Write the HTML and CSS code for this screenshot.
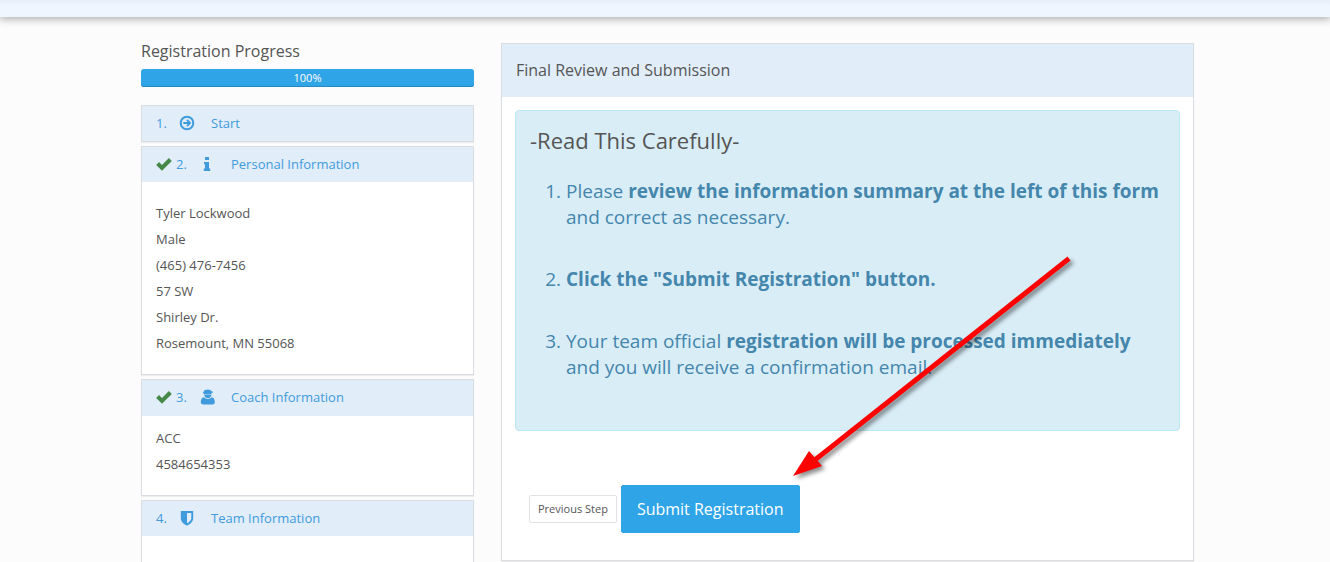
FILE: index.html
```
<!DOCTYPE html>
<html lang="en">
<head>
<meta charset="utf-8">
<title>Team Registration</title>
<link rel="stylesheet" href="styles.css">
</head>
<body>
<header class="topbar"></header>
<div class="layout">
  <aside class="sidebar">
    <div class="progress-label" id="progress-label">Registration Progress</div>
    <div class="progress" role="progressbar" aria-labelledby="progress-label" aria-valuenow="100"><div class="progress-bar">100%</div></div>

    <section class="step">
      <a class="step-heading" href="#start">
        <span class="step-number">1.</span>
        <svg class="icon" viewBox="0 0 16 16" fill="none" stroke="currentColor" stroke-width="2"><circle cx="8" cy="8" r="6.3"/><path d="M4.3 8h6M8 4.8 11 8 8 11.2" stroke-width="1.9"/></svg>
        <span>Start</span>
      </a>
    </section>

    <section class="step">
      <a class="step-heading" href="#personal">
        <svg class="icon check" viewBox="0 0 16 16"><path fill="currentColor" d="M.2 8.900 3 6 6 9 12.900 2 15.800 4.900 6 14.700z"/></svg>
        <span class="step-number">2.</span>
        <svg class="icon" viewBox="0 0 16 16" fill="currentColor"><path d="M6 1h4v3H6zM5 6h5v6.500h1.200v2.500H4.800v-2.500H6V8.300H5z"/></svg>
        <span>Personal Information</span>
      </a>
      <div class="step-body roomy">
        <div>Tyler Lockwood</div>
        <div>Male</div>
        <div>(465) 476-7456</div>
        <div>57 SW</div>
        <div>Shirley Dr.</div>
        <div>Rosemount, MN 55068</div>
      </div>
    </section>

    <section class="step">
      <a class="step-heading tall" href="#coach">
        <svg class="icon check" viewBox="0 0 16 16"><path fill="currentColor" d="M.2 8.900 3 6 6 9 12.900 2 15.800 4.900 6 14.700z"/></svg>
        <span class="step-number">3.</span>
        <svg class="icon" viewBox="0 0 16 16" fill="currentColor"><path d="M4.600 2.800C5 1.200 6.500.4 8.800.4c2 0 3.200.7 3.600 1.800l1.500.3v1.200h-1.400v1.200H4.700L4 3.300z"/><path d="M5 5.400h7.600C12.200 7.800 10.700 9 8.800 9S5.400 7.800 5 5.400z"/><path d="M5 8.300c1 1.100 2.300 1.700 3.800 1.700s2.800-.6 3.800-1.700c2.300.4 3.200 2.200 3.200 4.800 0 1.600-.8 2.400-2.300 2.400H4.100c-1.500 0-2.300-.8-2.300-2.400 0-2.600.9-4.400 3.200-4.800z"/></svg>
        <span>Coach Information</span>
      </a>
      <div class="step-body">
        <div>ACC</div>
        <div>4584654353</div>
      </div>
    </section>

    <section class="step step-open">
      <a class="step-heading" href="#team">
        <span class="step-number">4.</span>
        <svg class="icon" viewBox="0 0 16 16" fill="currentColor" fill-rule="evenodd"><path d="M1.800 1h12.400v7.200c0 3.400-2.600 5.600-6.200 7.300-3.600-1.700-6.200-3.900-6.200-7.300zM8 3v10.200c2.500-1.400 4.300-2.900 4.300-5V3z"/></svg>
        <span>Team Information</span>
      </a>
    </section>
  </aside>

  <main class="review">
    <h1 class="review-heading">Final Review and Submission</h1>
    <div class="review-body">
      <div class="notice">
        <h2 class="notice-title">-Read This Carefully-</h2>
        <ol class="notice-list">
          <li>Please <strong>review the information summary at the left of this form</strong> and correct as necessary.</li>
          <li><strong>Click the "Submit Registration" button.</strong></li>
          <li>Your team official <strong>registration will be processed immediately</strong> and you will receive a confirmation email.</li>
        </ol>
      </div>
      <div class="actions">
        <button class="btn btn-previous" type="button">Previous Step</button>
        <button class="btn btn-submit" type="submit">Submit Registration</button>
      </div>
    </div>
    <svg class="arrow" viewBox="0 0 290 230" aria-hidden="true">
      <g fill="#f00"><path d="M277.500 6.500 280.500 10.500 27 211.500 24 207.500z"/><path d="M3 226 19 201 32 216z"/></g>
    </svg>
  </main>
</div>
</body>
</html>
```
FILE: styles.css
```
* { box-sizing: border-box; }

body {
  margin: 0;
  min-height: 100vh;
  display: flex;
  flex-direction: column;
  background: #fcfcfc;
  color: #555;
  font: 13px/26px "Open Sans", sans-serif;
}

.topbar {
  height: 17px;
  background: linear-gradient(#e6eef7, #eff6ff 6px);
  box-shadow: 0 1px 8px 1px rgba(0, 0, 0, 0.32);
}

.layout {
  flex: 1;
  display: grid;
  grid-template-columns: minmax(0, 333fr) minmax(0, 693fr);
  column-gap: 27px;
  padding: 21px 136px 0 141px;
}

.sidebar {
  display: flex;
  flex-direction: column;
  gap: 4px;
}

.progress-label {
  font-size: 16px;
}

.progress {
  height: 18px;
  margin: 1px 0 14px;
}

.progress-bar {
  height: 18px;
  border-radius: 3px;
  background: #2fa4e7;
  box-shadow: inset 0 -1px 0 #2688c1;
  color: #fff;
  font-size: 11px;
  line-height: 18px;
  text-align: center;
}

.step {
  border: 1px solid #d9dde2;
  background: #fff;
  box-shadow: 0 1px 1px rgba(0, 0, 0, 0.06);
}

.step-open {
  flex: 1;
  border-bottom: 0;
}

.step-heading {
  display: flex;
  align-items: center;
  height: 35px;
  padding: 0 14px 2px;
  background: #e1edf9;
  color: #3f9bdc;
  text-decoration: none;
}

.tall { height: 36px; }

.step-number { width: 23px; }

.icon {
  width: 16px;
  height: 16px;
  margin-right: 16px;
}

.check {
  margin-right: 4px;
  color: #468847;
}

.step-body { padding: 9px 14px 18px; }

.roomy { padding-top: 18px; }

.review {
  position: relative;
  align-self: start;
  margin-top: 5px;
  border: 1px solid #d9dde2;
  background: #fff;
  box-shadow: 0 1px 1px rgba(0, 0, 0, 0.06);
}

.review-heading {
  margin: 0;
  padding: 14px;
  background: #e1edf9;
  font-size: 16px;
  font-weight: 400;
  line-height: 25px;
}

.review-body { padding: 13px 13px 27px; }

.notice {
  padding: 14px 14px 50px;
  border: 1px solid #bce8f1;
  border-radius: 4px;
  background: #d9edf7;
  color: #4486ac;
  font-size: 19px;
}

.notice-title {
  margin: 0 0 22px;
  color: #555;
  font-size: 22px;
  font-weight: 400;
  line-height: 31px;
}

.notice-list {
  display: grid;
  gap: 36px;
  margin: 0;
  padding: 0 0 0 36px;
}

.actions {
  display: flex;
  align-items: center;
  gap: 4px;
  padding: 54px 14px 0;
}

.btn {
  border: 1px solid #e2e2e2;
  border-radius: 2px;
  background: #fff;
  color: #555;
  font-family: inherit;
}

.btn-previous {
  padding: 4px 8px;
  font-size: 11px;
  line-height: 18px;
}

.btn-submit {
  padding: 11px 15px;
  border-color: #2fa4e7;
  background: #2fa4e7;
  color: #fff;
  font-size: 16px;
  line-height: 24px;
}

.arrow {
  position: absolute;
  top: 206px;
  left: 288px;
  width: 290px;
  height: 230px;
  pointer-events: none;
  filter: drop-shadow(3px 3px 2px rgba(0, 0, 0, 0.45));
}
```
